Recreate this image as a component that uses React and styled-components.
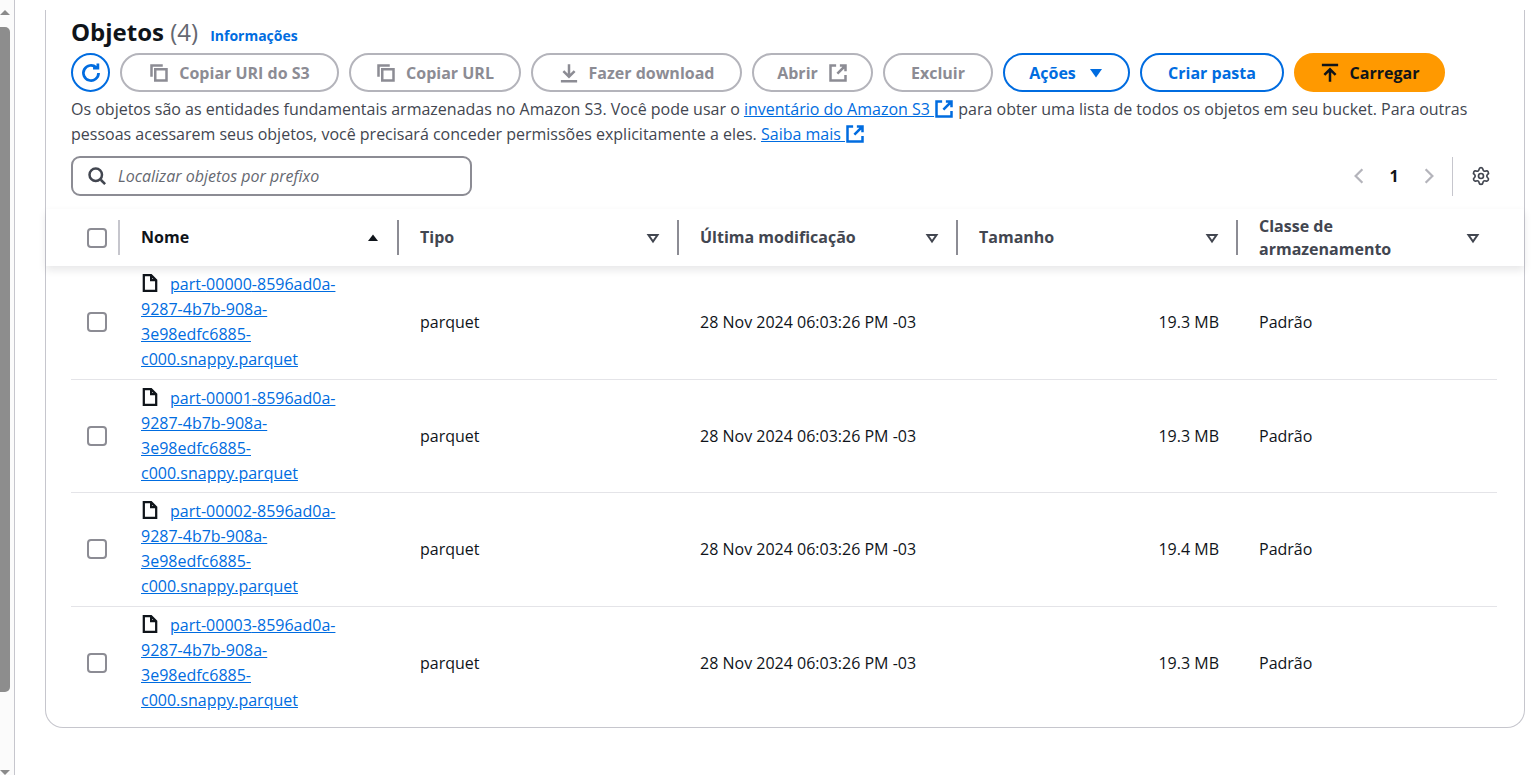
import React from "react";
import styled, { createGlobalStyle } from "styled-components";
import { Settings } from "lucide-react";

const GlobalStyle = createGlobalStyle`
  *,
  *::before,
  *::after {
    box-sizing: border-box;
  }
  html,
  body {
    margin: 0;
    padding: 0;
    height: 775px;
    overflow: hidden;
    background-color: #fff;
    color: #0f141a;
    font-size: 16px;
    font-family: "Open Sans", "Noto Sans", Arial, sans-serif;
  }
`;

const rows = [
  { id: "00000", size: "19.3 MB" },
  { id: "00001", size: "19.3 MB" },
  { id: "00002", size: "19.4 MB" },
  { id: "00003", size: "19.3 MB" }
];

const CopyIcon = () => (
  <Icon viewBox="0 0 16 16" width="20" height="20">
    <path d="M2 11V2h9M5 5h9v9H5z" />
  </Icon>
);
const DownloadIcon = () => (
  <Icon viewBox="0 0 16 16" width="20" height="20">
    <path d="M8 1v9.5M3.5 6.5 8 11l4.500-4.500M1.500 14.500h13" />
  </Icon>
);
const ExternalIcon = ({ size = 20 }) => (
  <Icon viewBox="0 0 16 16" width={size} height={size}>
    <path d="M14 9.500V14H2V2h4.500M9.500 2H14v4.500M14 2 7.500 8.500" />
  </Icon>
);
const RefreshIcon = () => (
  <Icon viewBox="0 0 16 16" width="22" height="22">
    <path d="M13.500 8a5.500 5.500 0 1 1-1.700-4M13 1v3.500H9.500" />
  </Icon>
);
const UploadIcon = () => (
  <Icon viewBox="0 0 16 16" width="20" height="20">
    <path d="M1.500 1.500h13M8 15V5M3.500 9.500 8 5l4.500 4.500" />
  </Icon>
);
const SearchIcon = () => (
  <Icon viewBox="0 0 16 16" width="20" height="20">
    <circle cx="7" cy="7" r="5" />
    <path d="m11 11 3.500 3.500" />
  </Icon>
);
const FileIcon = () => (
  <FileGlyph viewBox="0 0 16 16" width="18" height="18">
    <path d="M2.500 15V1h6.500l4.500 4.500V15zM9 1v4.500h4.500" />
  </FileGlyph>
);
const Chevron = ({ flip }) => (
  <PageArrow viewBox="0 0 16 16" width="18" height="18" $flip={flip}>
    <path d="M11 2 5 8l6 6" />
  </PageArrow>
);
const SortIcon = ({ active }) => (
  <SortGlyph viewBox="0 0 16 16" width="16" height="16" $active={active}>
    <path d={active ? "M8 4.500 13 11H3z" : "M3.500 5h9L8 11.500z"} />
  </SortGlyph>
);

function App() {
  return (
    <Page>
      <GlobalStyle />
      <Scrollbar>
        <ScrollArrow />
        <ScrollThumb />
        <ScrollArrow $down />
      </Scrollbar>
      <Card>
        <CardHead>
          <Title>
            Objetos <Count>(4)</Count>
            <InfoLink>Informações</InfoLink>
          </Title>
          <Toolbar>
            <RoundButton>
              <RefreshIcon />
            </RoundButton>
            <Button $w={219} disabled>
              <CopyIcon />
              Copiar URI do S3
            </Button>
            <Button $w={172} disabled>
              <CopyIcon />
              Copiar URL
            </Button>
            <Button $w={211} disabled>
              <DownloadIcon />
              Fazer download
            </Button>
            <Button $w={121} disabled>
              Abrir
              <ExternalIcon />
            </Button>
            <Button $w={110} disabled>
              Excluir
            </Button>
            <Button $w={127} $variant="normal">
              Ações
              <Caret viewBox="0 0 16 16" width="16" height="16">
                <path d="M2 4h12L8 12.500z" />
              </Caret>
            </Button>
            <Button $w={144} $variant="normal">
              Criar pasta
            </Button>
            <Button $w={151} $variant="primary">
              <UploadIcon />
              Carregar
            </Button>
          </Toolbar>
          <Description>
            Os objetos são as entidades fundamentais armazenadas no Amazon S3.
            Você pode usar o{" "}
            <TextLink>
              <u>inventário do Amazon S3 </u>
              <ExternalIcon />
            </TextLink>{" "}
            para obter uma lista de todos os objetos em seu bucket. Para outras
            pessoas acessarem seus objetos, você precisará conceder permissões
            explicitamente a eles.{" "}
            <TextLink>
              <u>Saiba mais </u>
              <ExternalIcon />
            </TextLink>
          </Description>
          <FilterRow>
            <SearchBox>
              <SearchIcon />
              <SearchInput placeholder="Localizar objetos por prefixo" />
            </SearchBox>
            <Pager>
              <Chevron />
              <PageNumber>1</PageNumber>
              <Chevron flip />
              <PagerDivider />
              <Settings size={20} strokeWidth={2} color="#424650" />
            </Pager>
          </FilterRow>
        </CardHead>
        <TableHead>
          <CheckCell $head>
            <Checkbox />
          </CheckCell>
          <HeadCell $active>
            Nome
            <SortIcon active />
          </HeadCell>
          <HeadCell>
            Tipo
            <SortIcon />
          </HeadCell>
          <HeadCell>
            Última modificação
            <SortIcon />
          </HeadCell>
          <HeadCell>
            Tamanho
            <SortIcon />
          </HeadCell>
          <HeadCell $narrow>
            <span>
              Classe de
              <br />
              armazenamento
            </span>
            <SortIcon />
          </HeadCell>
        </TableHead>
        <TableBody>
          {rows.map(row => (
            <Row key={row.id}>
              <CheckCell>
                <Checkbox />
              </CheckCell>
              <NameCell>
                <FileIcon />
                <FileLink>
                  part-{row.id}-8596ad0a-
                  <br />
                  9287-4b7b-908a-
                  <br />
                  3e98edfc6885-
                  <br />
                  c000.snappy.parquet
                </FileLink>
              </NameCell>
              <Cell>parquet</Cell>
              <Cell>28 Nov 2024 06:03:26 PM -03</Cell>
              <SizeCell>{row.size}</SizeCell>
              <Cell>Padrão</Cell>
            </Row>
          ))}
        </TableBody>
      </Card>
    </Page>
  );
}

const columns = "49px 279px 280px 279px 280px 1fr";

const Page = styled.div`
  display: flex;
  align-items: flex-start;
  height: 775px;
  overflow: hidden;
`;
const Scrollbar = styled.div`
  display: flex;
  flex-direction: column;
  align-items: flex-start;
  flex: none;
  width: 15px;
  height: 775px;
  border-right: 1px solid #c6c6cd;
  background-color: #fbfbfb;
`;
const ScrollArrow = styled.div`
  flex: none;
  margin: ${props => (props.$down ? "auto 0 0" : "10px 0 0")};
  width: 0;
  height: 0;
  border-left: 5px solid transparent;
  border-right: 5px solid transparent;
  border-${props => (props.$down ? "top" : "bottom")}: 5px solid #8a8a8a;
`;
const ScrollThumb = styled.div`
  flex: none;
  margin-top: 12px;
  width: 10px;
  height: 665px;
  border-radius: 0 5px 5px 0;
  background-color: #8d8d8d;
`;
const Card = styled.main`
  flex: none;
  margin: 10px 0 0 30px;
  width: 1480px;
  height: 718px;
  border: 1px solid #c6c6cd;
  border-top: none;
  border-radius: 0 0 18px 18px;
  background-color: #fff;
`;
const CardHead = styled.div`
  padding: 0 27px 0 25px;
`;
const Title = styled.h2`
  display: flex;
  align-items: baseline;
  margin: 6px 0 0;
  height: 32px;
  font-size: 24px;
  line-height: 32px;
  font-weight: 700;
  color: #0f141a;
  white-space: pre;
`;
const Count = styled.span`
  font-weight: 400;
  color: #656871;
`;
const InfoLink = styled.a`
  margin-left: 12px;
  font-size: 14px;
  font-weight: 700;
  color: #006ce0;
`;
const Toolbar = styled.div`
  display: flex;
  gap: 10px;
  margin-top: 5px;
`;
const RoundButton = styled.button`
  display: flex;
  align-items: center;
  justify-content: center;
  padding: 0;
  width: 39px;
  height: 39px;
  border: 2px solid #006ce0;
  border-radius: 50%;
  background: #fff;
  color: #006ce0;
`;
const Button = styled.button`
  display: flex;
  align-items: center;
  justify-content: center;
  gap: 10px;
  flex: none;
  padding: 0;
  width: ${props => props.$w}px;
  height: 39px;
  border: 2px solid
    ${props =>
      props.$variant === "primary"
        ? "#ff9900"
        : props.$variant === "normal"
        ? "#006ce0"
        : "#b4b4bb"};
  border-radius: 20px;
  background: ${props => (props.$variant === "primary" ? "#ff9900" : "#fff")};
  color: ${props =>
    props.$variant === "primary"
      ? "#0f141a"
      : props.$variant === "normal"
      ? "#006ce0"
      : "#8c8c94"};
  font-family: inherit;
  font-size: 16px;
  font-weight: 700;
`;
const Icon = styled.svg`
  flex: none;
  fill: none;
  stroke: currentColor;
  stroke-width: 2;
`;
const Caret = styled.svg`
  flex: none;
  margin-left: 2px;
  fill: currentColor;
`;
const Description = styled.p`
  margin: 5px 0 0;
  font-size: 16px;
  line-height: 24.500px;
  color: #424650;
`;
const TextLink = styled.a`
  color: #006ce0;
  svg {
    vertical-align: -4px;
  }
`;
const FilterRow = styled.div`
  display: flex;
  align-items: center;
  justify-content: space-between;
  margin-top: 10px;
`;
const SearchBox = styled.div`
  display: flex;
  align-items: center;
  gap: 11px;
  padding: 0 14px;
  width: 401px;
  height: 40px;
  border: 2px solid #8c8c94;
  border-radius: 9px;
  color: #424650;
`;
const SearchInput = styled.input`
  flex: 1;
  min-width: 0;
  padding: 0;
  border: none;
  outline: none;
  background: none;
  font-family: inherit;
  font-size: 16px;
  font-style: italic;
  &::placeholder {
    color: #656871;
    opacity: 1;
  }
`;
const Pager = styled.div`
  display: flex;
  align-items: center;
  padding-right: 6px;
`;
const PageArrow = styled.svg`
  fill: none;
  stroke: #b4b4bb;
  stroke-width: 2;
  transform: ${props => (props.$flip ? "scaleX(-1)" : "none")};
`;
const PageNumber = styled.span`
  width: 52px;
  text-align: center;
  font-weight: 700;
  color: #0f141a;
`;
const PagerDivider = styled.div`
  margin: 0 18px 0 14px;
  width: 1px;
  height: 39px;
  background-color: #c6c6cd;
`;
const TableHead = styled.div`
  position: relative;
  display: grid;
  grid-template-columns: ${columns};
  align-items: center;
  margin-top: 13px;
  padding: 0 27px 0 25px;
  height: 57px;
  box-shadow: 0 4px 8px rgba(15, 20, 26, 0.1);
`;
const CheckCell = styled.div`
  display: flex;
  align-items: center;
  height: 35px;
  padding-left: 16px;
  border-right: ${props => (props.$head ? "2px solid #c6c6cd" : "none")};
`;
const Checkbox = styled.div`
  width: 20px;
  height: 20px;
  border: 2px solid #8c8c94;
  border-radius: 4px;
  background-color: #fff;
`;
const HeadCell = styled.div`
  display: flex;
  align-items: center;
  justify-content: space-between;
  height: 35px;
  padding: 0 16px 0 21px;
  border-right: 2px solid #8c8c94;
  font-weight: 700;
  line-height: 23px;
  white-space: nowrap;
  color: ${props => (props.$active ? "#0f141a" : "#424650")};
  &:last-child {
    border-right: none;
  }
`;
const SortGlyph = styled.svg`
  flex: none;
  fill: ${props => (props.$active ? "#0f141a" : "none")};
  stroke: ${props => (props.$active ? "none" : "#424650")};
  stroke-width: 2;
`;
const TableBody = styled.div`
  padding: 0 27px 0 25px;
`;
const Row = styled.div`
  display: grid;
  grid-template-columns: ${columns};
  align-items: center;
  height: 113.500px;
  border-bottom: 1px solid #e4e4e8;
  &:last-child {
    border-bottom: none;
  }
`;
const Cell = styled.div`
  padding-left: 21px;
  color: #0f141a;
`;
const SizeCell = styled.div`
  padding-right: 19px;
  text-align: right;
  color: #0f141a;
`;
const NameCell = styled.div`
  padding-left: 21px;
  line-height: 25px;
`;
const FileGlyph = styled.svg`
  margin-right: 11px;
  vertical-align: -2px;
  fill: none;
  stroke: #0f141a;
  stroke-width: 2;
`;
const FileLink = styled.a`
  color: #006ce0;
  text-decoration: underline;
`;

export default App;
